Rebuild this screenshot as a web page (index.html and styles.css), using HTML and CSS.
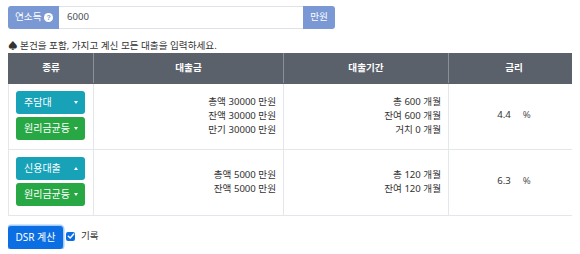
FILE: index.html
```html
<!DOCTYPE html>
<html lang="ko">
<head>
<meta charset="utf-8">
<link rel="stylesheet" href="styles.css">
</head>
<body>
<div class="ig">
  <span class="ig-label">연소득 <span class="qicon">?</span></span>
  <span class="ig-input">6000</span>
  <span class="ig-btn">만원</span>
</div>
<p class="notice">♠ 본건을 포함, 가지고 계신 모든 대출을 입력하세요.</p>
<table class="loans">
  <colgroup>
    <col class="c1"><col class="c2"><col class="c3"><col class="c4">
  </colgroup>
  <thead>
    <tr><th>종류</th><th>대출금</th><th>대출기간</th><th>금리</th></tr>
  </thead>
  <tbody>
    <tr>
      <td>
        <div class="btns">
          <span class="btn btn-info">주담대 <i class="caret"></i></span>
          <span class="btn btn-success">원리금균등 <i class="caret"></i></span>
        </div>
      </td>
      <td class="num">총액 30000 만원<br>잔액 30000 만원<br>만기 30000 만원</td>
      <td class="num">총 600 개월<br>잔여 600 개월<br>거치 0 개월</td>
      <td class="rate"><span>4.4</span><span class="pct">%</span></td>
    </tr>
    <tr>
      <td>
        <div class="btns">
          <span class="btn btn-info">신용대출 <i class="caret up"></i></span>
          <span class="btn btn-success">원리금균등 <i class="caret"></i></span>
        </div>
      </td>
      <td class="num">총액 5000 만원<br>잔액 5000 만원</td>
      <td class="num">총 120 개월<br>잔여 120 개월</td>
      <td class="rate"><span>6.3</span><span class="pct">%</span></td>
    </tr>
  </tbody>
</table>
<div class="actions">
  <span class="btn-primary">DSR 계산</span>
  <span class="check"><svg width="8" height="8" viewBox="0 0 8 8"><path d="M1.3 4.2 L3.2 6 L6.7 2" fill="none" stroke="#fff" stroke-width="1.4" stroke-linecap="round" stroke-linejoin="round"/></svg></span>
  <span class="check-label">기록</span>
</div>
</body>
</html>
```
FILE: styles.css
```css
html, body {
  overflow: hidden;
}
body {
  margin: 6px 8px 8px;
  font-family: "Noto Sans", "Noto Sans CJK KR", sans-serif;
  font-size: 9.6px;
  line-height: 14.4px;
  color: #333;
  background: #fff;
}
.ig {
  display: flex;
  width: 327px;
  height: 23px;
}
.ig-label {
  display: flex;
  align-items: center;
  gap: 3px;
  width: 51px;
  box-sizing: border-box;
  padding-left: 7px;
  background: #7a98d4;
  color: #fff;
  border-radius: 3px 0 0 3px;
}
.qicon {
  display: inline-flex;
  align-items: center;
  justify-content: center;
  width: 8.5px;
  height: 8.5px;
  border-radius: 50%;
  background: #fff;
  color: #7a98d4;
  font-size: 7px;
  font-weight: 700;
  line-height: 1;
  font-family: "Liberation Sans", sans-serif;
}
.ig-input {
  flex: 1;
  display: flex;
  align-items: center;
  padding-left: 8px;
  border: 1px solid #dfe3e8;
  border-left: none;
  border-right: none;
  color: #495057;
}
.ig-btn {
  display: flex;
  align-items: center;
  justify-content: center;
  width: 32px;
  background: #7a98d4;
  color: #fff;
  border-radius: 0 3px 3px 0;
}
.notice {
  margin: 9px 0 0;
  line-height: 15px;
  color: #333;
}
.loans {
  border-collapse: collapse;
  table-layout: fixed;
  width: 571px;
}
.c1 { width: 85px; }
.c2 { width: 190px; }
.c3 { width: 165px; }
.c4 { width: 131px; }
.loans th {
  height: 29px;
  padding: 0;
  background: #5a616b;
  color: #fff;
  font-weight: 700;
  text-align: center;
  border: 1px solid #5a616b;
  border-right-color: #8a9098;
}
.loans td {
  border: 1px solid #e3e6ea;
  padding: 7px 7px 9px;
  vertical-align: middle;
}
.btns {
  display: flex;
  flex-direction: column;
  gap: 3px;
}
.btn {
  display: flex;
  align-items: center;
  justify-content: space-between;
  width: 69px;
  height: 23px;
  box-sizing: border-box;
  padding: 0 7px 0 8px;
  border-radius: 3px;
  color: #fff;
  font-size: 10px;
}
.btn-info { background: #17a2b8; }
.btn-success { background: #28a745; }
.caret {
  width: 0;
  height: 0;
  border-left: 2.5px solid transparent;
  border-right: 2.5px solid transparent;
  border-top: 3px solid #fff;
}
.caret.up {
  border-top: none;
  border-bottom: 3px solid #fff;
}
.num {
  text-align: right;
  line-height: 14px;
}
.rate {
  text-align: center;
}
.pct {
  margin-left: 12px;
  color: #555;
}
.actions {
  display: flex;
  align-items: center;
  margin-top: 10px;
}
.btn-primary {
  display: flex;
  align-items: center;
  justify-content: center;
  width: 55px;
  height: 23px;
  border-radius: 3px;
  background: #0b6fe3;
  color: #fff;
  font-size: 10px;
  box-shadow: 0 0 0 1.5px rgba(90, 160, 250, 0.55);
}
.check {
  display: flex;
  align-items: center;
  justify-content: center;
  width: 9px;
  height: 9px;
  margin-left: 3px;
  margin-top: -3px;
  border-radius: 2px;
  background: #0b6fe3;
}
.check-label {
  margin-left: 6px;
  margin-top: -3px;
}
```
